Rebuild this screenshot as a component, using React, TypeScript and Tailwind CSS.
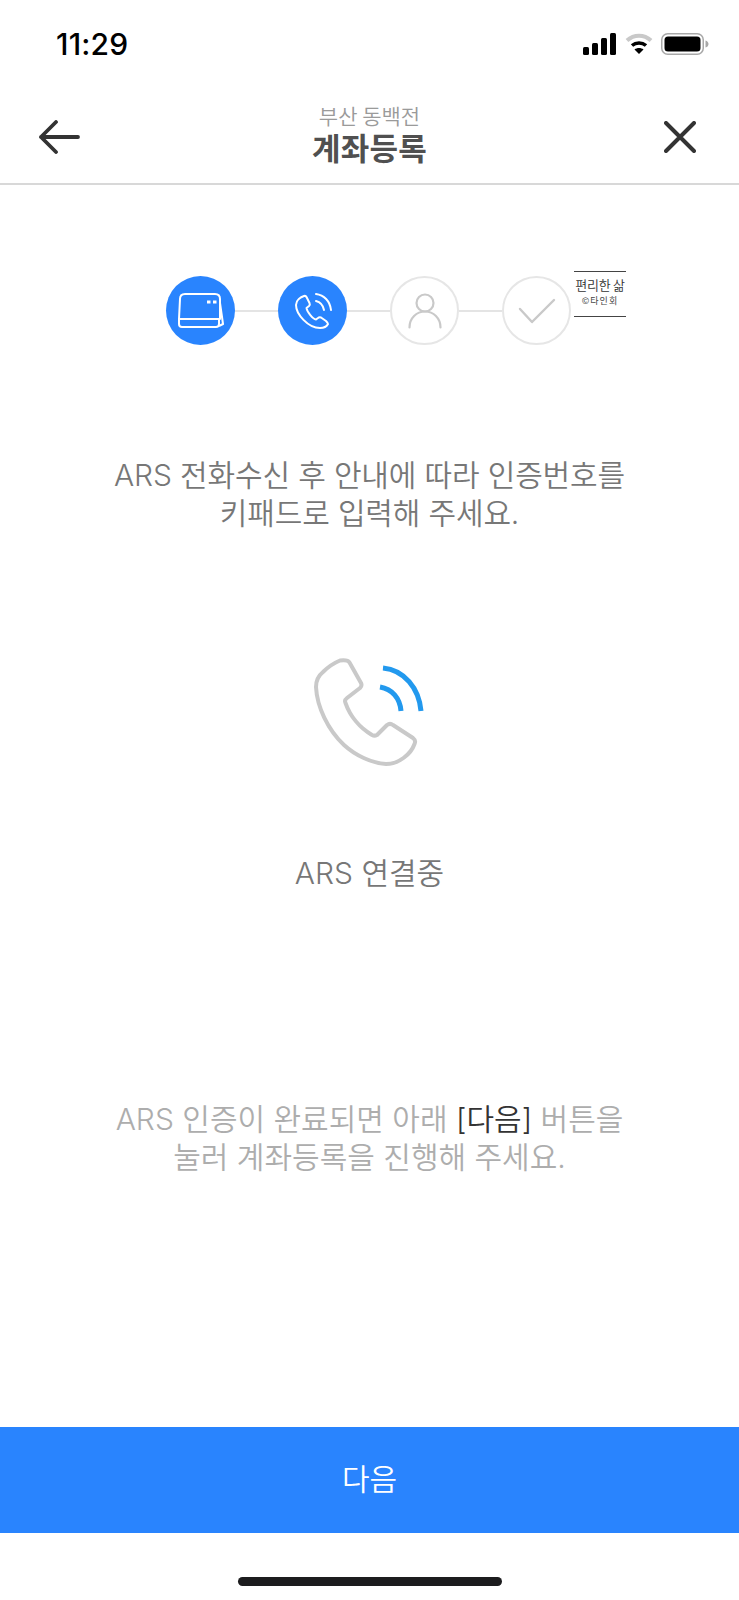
const font = { fontFamily: '"Noto Sans CJK KR", "Noto Sans", sans-serif' };
const bodyFont = { fontFamily: 'Inter, "Noto Sans CJK KR", sans-serif' };

function StatusBar() {
  return (
    <div className="flex h-[90px] items-center justify-between pl-[56px] pr-[30px] pb-[2px]">
      <span className="text-[30px] font-medium leading-none tracking-[0.2px] text-black [font-family:Inter,sans-serif]">11:29</span>
      <div className="flex items-center gap-[8px]">
        <svg width="34" height="22" viewBox="0 0 34 22" fill="#000">
          <rect x="0" y="14" width="6" height="8" rx="1.5" />
          <rect x="9" y="10" width="6" height="12" rx="1.5" />
          <rect x="18" y="5" width="6" height="17" rx="1.5" />
          <rect x="27" y="0" width="6" height="22" rx="1.5" />
        </svg>
        <svg width="28" height="22" viewBox="0 0 28 22" fill="none">
          <path d="M2 7.5C9 1 19 1 26 7.5" stroke="#c9c9c9" strokeWidth="4" />
          <path d="M7 12.5C11 9 17 9 21 12.5" stroke="#000" strokeWidth="3.5" />
          <path d="M14 21L9.5 16.5C12 14.5 16 14.5 18.5 16.5Z" fill="#000" />
        </svg>
        <svg width="48" height="22" viewBox="0 0 48 22" fill="none">
          <rect x="0.75" y="0.75" width="41.5" height="20.5" rx="6" stroke="#a8a8a8" strokeWidth="1.5" />
          <rect x="3.5" y="3.5" width="36" height="15" rx="3.5" fill="#000" />
          <path d="M44.5 7.5C46.5 8 47.5 9.5 47.5 11S46.5 14 44.5 14.5Z" fill="#a8a8a8" />
        </svg>
      </div>
    </div>
  );
}

function Header() {
  return (
    <div className="relative flex h-[95px] flex-col items-center border-b-2 border-[#d8d8d8] pt-[12px]" style={font}>
      <span className="text-[21px] font-[350] leading-[27px] text-[#9a9a9a]">부산 동백전</span>
      <span className="text-[31px] font-bold leading-[36px] tracking-[0.2px] text-[#505050]">계좌등록</span>
      <svg className="absolute left-[38px] top-[30px]" width="42" height="34" viewBox="0 0 42 34" fill="none" stroke="#333" strokeWidth="3.8" strokeLinecap="round" strokeLinejoin="round">
        <path d="M40 17H3M18 2L3 17L18 32" />
      </svg>
      <svg className="absolute left-[664px] top-[31px]" width="32" height="32" viewBox="0 0 32 32" fill="none" stroke="#333" strokeWidth="4" strokeLinecap="round">
        <path d="M2 2L30 30M30 2L2 30" />
      </svg>
    </div>
  );
}

function Circle({ active, children }: { active?: boolean; children: React.ReactNode }) {
  return (
    <div
      className={
        active
          ? "flex h-[69px] w-[69px] shrink-0 items-center justify-center rounded-full bg-[#2984fe]"
          : "flex h-[69px] w-[69px] shrink-0 items-center justify-center rounded-full border-2 border-[#e6e6e6] bg-white"
      }
    >
      {children}
    </div>
  );
}

function Link() {
  return <div className="h-[2px] w-[43px] shrink-0 bg-[#e4e4e4]" />;
}

function Steps() {
  return (
    <div className="mt-[91px] flex h-[69px] items-center pl-[166px]">
      <Circle active>
        <svg width="47" height="35" viewBox="0 0 47 35" fill="none" stroke="#fff" strokeWidth="2" strokeLinejoin="round">
          <path d="M3 6C3 3 5 1 8 1H38C41 1 43 3 43 6V26H2Z" />
          <path d="M2 26H42V31C42 33 41 34 39 34H5C3 34 2 33 2 31Z" />
          <path d="M43 10L46 31L42 33" />
          <path d="M30 9H33.5M36 9H39.5" strokeWidth="3" />
        </svg>
      </Circle>
      <Link />
      <Circle active>
        <svg width="38" height="38" viewBox="0 0 38 38" fill="none" stroke="#fff" strokeWidth="2" strokeLinecap="round" strokeLinejoin="round">
          <path d="M10 4C7 5 2 8 2 13C2 22 14 36 26 36C30 36 33 34 34 32C34 31 33 30 32 29L27 25.5C26 25 25 25 24 26L22 27.5C19 27 13 20 12.5 16L15 14C16 13 16 12 15.5 11L12.5 5C12 4 11 3.7 10 4Z" />
          <path d="M22 2C30 3 36 9 37 18" />
          <path d="M22 9C26 10 29 13 30 18" />
        </svg>
      </Circle>
      <Link />
      <Circle>
        <svg width="34" height="36" viewBox="0 0 34 36" fill="none" stroke="#c9c9c9" strokeWidth="2.2" strokeLinecap="round">
          <circle cx="17" cy="10" r="8.5" />
          <path d="M1.5 34.5C1.5 25 8.5 18.5 17 18.5S32.5 25 32.5 34.5" />
        </svg>
      </Circle>
      <Link />
      <Circle>
        <svg width="38" height="28" viewBox="0 0 38 28" fill="none" stroke="#c9c9c9" strokeWidth="2.4" strokeLinecap="round" strokeLinejoin="round">
          <path d="M2 12L14 25L36 3" />
        </svg>
      </Circle>
      <div className="mb-[33px] ml-[3px] flex h-[46px] w-[52px] shrink-0 flex-col items-center border-y border-y-[#444] pt-[4px]" style={font}>
        <span className="whitespace-nowrap text-[13px] font-[350] leading-[18px] tracking-[-0.2px] text-[#333]">편리한 삶</span>
        <span className="whitespace-nowrap text-[9px] leading-[13px] tracking-[1px] text-[#444]">©타인회</span>
      </div>
    </div>
  );
}

function BigPhone() {
  return (
    <svg width="112" height="110" viewBox="0 0 112 110" fill="none" strokeLinejoin="round">
      <path
        stroke="#c9c9c9"
        strokeWidth="4"
        d="M26 3.5C30 3 34 3 35.5 5.5L47 26C48 28 47.5 29.5 46 31L33 41C31 42.5 30.5 44 31.5 46C36 59 46 71 58 78C60 79 62 78.5 63 78L73 68C75 66.5 77 66.5 79 68L99 81C101.5 83 101.5 85 100.5 87C97 97 85 107 72 107C58 106 42 99 30 88C14 73 3 50 2 30C2 24 4 19 9 15C14 10 20 6 26 3.5Z"
      />
      <path stroke="#2299ee" strokeWidth="5" d="M69 11C90 13 105 31 107 54" />
      <path stroke="#2299ee" strokeWidth="5" d="M66 30C78 32 86 41 87 54" />
    </svg>
  );
}

export default function App() {
  return (
    <div className="flex h-[1600px] w-[739px] flex-col bg-white" style={font}>
      <StatusBar />
      <Header />
      <Steps />
      <div className="mt-[111px] flex flex-col items-center text-[30px] font-[350] leading-[38px] tracking-[-0.15px] text-[#777]" style={bodyFont}>
        <p>ARS 전화수신 후 안내에 따라 인증번호를</p>
        <p>키패드로 입력해 주세요.</p>
      </div>
      <div className="mt-[125px] flex justify-center">
        <BigPhone />
      </div>
      <p className="mt-[87px] text-center text-[30px] font-[350] leading-[38px] text-[#777]" style={bodyFont}>ARS 연결중</p>
      <div className="mt-[208px] flex flex-col items-center text-[30px] font-[350] leading-[38px] text-[#adadad]" style={bodyFont}>
        <p>
          ARS 인증이 완료되면 아래 <span className="text-[#333]">[다음]</span> 버튼을
        </p>
        <p>눌러 계좌등록을 진행해 주세요.</p>
      </div>
      <div className="flex-1" />
      <button className="flex h-[106px] items-center justify-center bg-[#2984fe] pb-[6px] text-[30px] font-[350] text-white">다음</button>
      <div className="flex h-[67px] items-end justify-center pb-[14px]">
        <div className="h-[9px] w-[264px] rounded-full bg-[#1c1c1e]" />
      </div>
    </div>
  );
}
